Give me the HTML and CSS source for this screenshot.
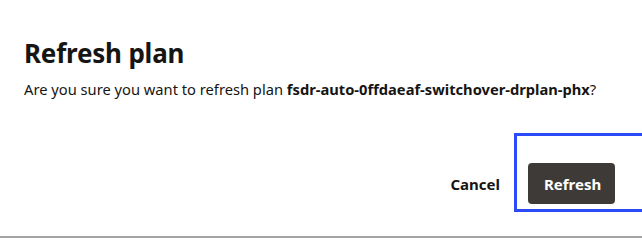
FILE: index.html
```html
<!DOCTYPE html>
<html>
<head>
<meta charset="utf-8">
<link rel="stylesheet" href="styles.css">
</head>
<body>
<div class="page">
  <div class="dialog">
    <h1 class="title">Refresh plan</h1>
    <p class="message">Are you sure you want to refresh plan <b>fsdr-auto-0ffdaeaf-switchover-drplan-phx</b>?</p>
    <div class="actions">
      <button class="btn btn-text">Cancel</button>
      <button class="btn btn-primary">Refresh</button>
    </div>
  </div>
  <div class="focus-box"></div>
</div>
</body>
</html>
```

FILE: styles.css
```css
html, body {
  margin: 0;
  padding: 0;
  background: #ffffff;
}
body {
  font-family: "Noto Sans", "Open Sans", sans-serif;
  color: #161513;
  overflow: hidden;
}
.page {
  position: relative;
  height: 236px;
  border-bottom: 2px solid #a3a3a3;
}
.dialog {
  padding: 37px 27px 0 24px;
}
.title {
  margin: 0;
  font-size: 26px;
  line-height: 32px;
  font-weight: 700;
  letter-spacing: -0.2px;
}
.message {
  margin: 10px 0 0 0;
  font-size: 14.7px;
  line-height: 20px;
}
.message b {
  font-weight: 700;
}
.actions {
  display: flex;
  justify-content: flex-end;
  gap: 14px;
  margin-top: 64px;
}
.btn {
  height: 41px;
  border: none;
  border-radius: 4px;
  padding: 0 16px;
  font-family: "Noto Sans", "Open Sans", sans-serif;
  font-size: 15px;
  font-weight: 700;
  cursor: pointer;
}
.btn-text {
  background: transparent;
  color: #161513;
  padding: 0 14px;
}
.btn-primary {
  background: #3e3a37;
  color: #ffffff;
  width: 87px;
}
.focus-box {
  position: absolute;
  left: 514px;
  top: 133px;
  width: 140px;
  height: 73px;
  border: 3px solid #2a4bf7;
}
```
